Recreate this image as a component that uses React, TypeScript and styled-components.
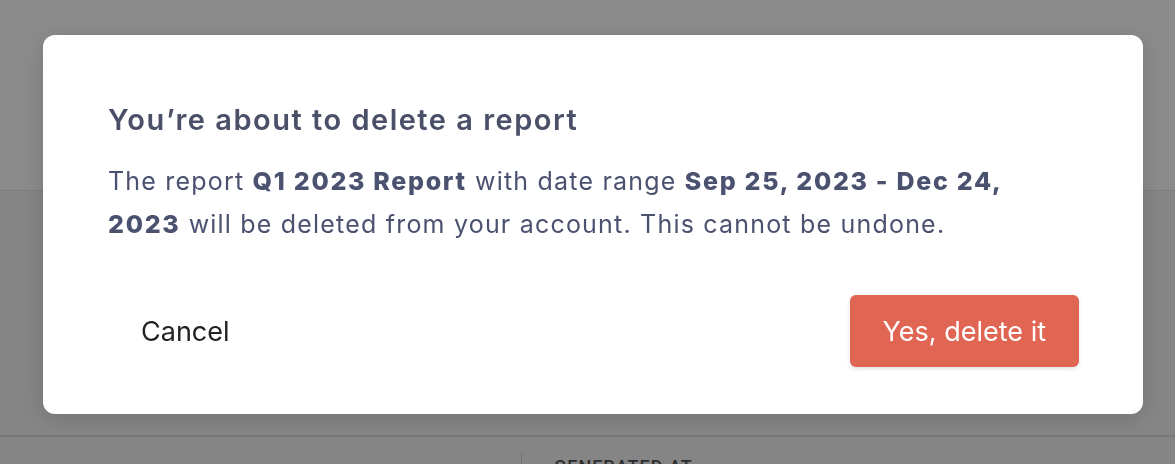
import React from 'react';
import styled, { createGlobalStyle } from 'styled-components';

const GlobalStyle = createGlobalStyle`
  html, body {
    margin: 0;
    padding: 0;
    background: #f6f6f6;
    font-family: Inter, 'Noto Sans', sans-serif;
  }
  * { box-sizing: border-box; }
`;

const Page = styled('div')`
  width: 1175px;
  height: 464px;
  overflow: hidden;
  display: flex;
  flex-direction: column;
`;

const Header = styled('div')`
  height: 191px;
  background: #ffffff;
  border-bottom: 1px solid #e6e6e6;
`;

const Body = styled('div')`
  flex: 1;
  display: flex;
  flex-direction: column;
  justify-content: flex-end;
  background: #f4f4f4;
`;

const Table = styled('div')`
  height: 29px;
  border-top: 2px solid #dcdcdc;
  display: flex;
  padding-top: 16px;
`;

const Cell = styled('div')<{ $width?: number }>`
  width: ${p => (p.$width ? `${p.$width}px` : 'auto')};
  padding: 5px 0 0 32px;
  font-family: Roboto, sans-serif;
  font-size: 18px;
  font-weight: 500;
  letter-spacing: 1px;
  color: #555;
  text-transform: uppercase;
  line-height: 18px;
  height: 14px;
  overflow: hidden;
  & + & {
    border-left: 1px solid #d4d4d4;
  }
`;

const Overlay = styled('div')`
  position: fixed;
  inset: 0;
  background: rgba(0, 0, 0, 0.455);
  padding: 35px 32px 0 43px;
`;

const Dialog = styled('div')`
  width: 1100px;
  background: #ffffff;
  border-radius: 12px;
  box-shadow: 0 4px 24px rgba(0, 0, 0, 0.15);
  padding: 67px 64px 47px 65px;
`;

const Title = styled('h2')`
  margin: 0;
  font-size: 29px;
  line-height: 36px;
  font-weight: 600;
  color: #4a5068;
  letter-spacing: 1.5px;
`;

const Message = styled('p')`
  margin: 22px 0 0;
  max-width: 950px;
  font-size: 25px;
  line-height: 43px;
  color: #4b5270;
  letter-spacing: 1.2px;

  strong {
    font-weight: 800;
    letter-spacing: 1.7px;
  }
`;

const Actions = styled('div')`
  margin-top: 49px;
  display: flex;
  justify-content: space-between;
  align-items: center;
`;

const Button = styled('button')<{ $danger?: boolean }>`
  height: 72px;
  padding: 0 33px;
  border: none;
  border-radius: 6px;
  font-family: Inter, sans-serif;
  font-size: 27px;
  cursor: pointer;
  background: ${p => (p.$danger ? '#e06552' : 'transparent')};
  color: ${p => (p.$danger ? '#ffffff' : '#222222')};
  box-shadow: ${p => (p.$danger ? '0 2px 4px rgba(0,0,0,0.12)' : 'none')};
`;

export default function App() {
  return (
    <>
      <GlobalStyle />
      <Page>
        <Header />
        <Body>
          <Table>
            <Cell $width={521} />
            <Cell>Generated at</Cell>
          </Table>
        </Body>
      </Page>
      <Overlay>
        <Dialog role="dialog">
          <Title>You’re about to delete a report</Title>
          <Message>
            The report <strong>Q1 2023 Report</strong> with date range{' '}
            <strong>Sep 25, 2023 - Dec 24, 2023</strong> will be deleted from your account. This
            cannot be undone.
          </Message>
          <Actions>
            <Button>Cancel</Button>
            <Button $danger>Yes, delete it</Button>
          </Actions>
        </Dialog>
      </Overlay>
    </>
  );
}
